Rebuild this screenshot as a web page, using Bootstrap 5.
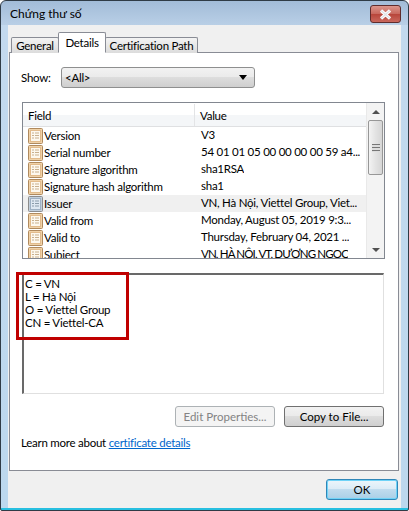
<!DOCTYPE html>
<html lang="vi"><head><meta charset="utf-8"><title>Chứng thư số</title>
<link href="https://cdn.jsdelivr.net/npm/bootstrap@5.3.0/dist/css/bootstrap.min.css" rel="stylesheet">
<style>
html,body{margin:0;background:#fff}
body{width:409px;height:511px;overflow:hidden;font:11.5px/15px Lato,"Noto Sans",sans-serif;letter-spacing:-.25px;color:#000}
.frame{position:relative;width:409px;height:511px;border:1px solid #2f3b46;border-radius:6px 6px 2px 2px;background:linear-gradient(#a2bcd8 0,#b9cfe6 24px,#c3d9ee 24px,#bcd8ee calc(100% - 2px),#27bfe0 calc(100% - 2px));padding:0 7px 2px 7px;display:flex;flex-direction:column}
.ttl{height:24px;flex:none;padding:5px 3px 0 2px;color:#000;display:flex;justify-content:space-between;align-items:flex-start;margin-right:-3px;font-size:12px;letter-spacing:0}
.xbtn{width:31px;height:18px;margin:-1px 0 0 0;display:flex;border:1px solid #5f2c2c;border-radius:3px;background:linear-gradient(#dc968c,#c9695e 48%,#b8463b 52%,#c9675c);align-items:center;justify-content:center}
.client{flex:1;background:#f0f0f0;padding:7px 3px 0 1px;display:flex;flex-direction:column}
.tabrow{display:flex;height:21px;padding-left:2px;align-items:flex-end;position:relative;z-index:1;margin-bottom:-1px}
.tabx{height:16px;border:1px solid #898c95;border-bottom:0;background:linear-gradient(#f3f3f3,#dcdcdc);line-height:15px;margin-right:-1px;border-radius:2px 2px 0 0;text-align:center;white-space:nowrap}
.tabw1{width:48px}.tabw2{width:48px}.tabw3{width:93px}
.tabx.on{height:21px;background:#fff;padding-top:2px;border-bottom:1px solid #fff;position:relative;z-index:2}
.panel{height:419px;border:1px solid #898c95;background:#fff;padding:14px 12px 0;flex:none;width:390px}
.showrow{display:flex;align-items:center;height:21px;margin-bottom:14px;margin-left:-1px}
.showlbl{width:40px}
.sel{width:194px;height:21px;border:1px solid #8e8f8f;border-radius:3px;background:linear-gradient(#f2f2f2 0,#ebebeb 45%,#dddddd 50%,#cfcfcf 100%);padding:0 3px;display:flex;align-items:center;justify-content:space-between}
.sel i{border:4px solid transparent;border-top:5px solid #000;border-bottom:0;margin-right:4px}
.listbox{height:157px;border:1px solid #828790;display:flex;overflow:hidden;width:363px}
.lcol{flex:1;min-width:0}
.lhead{display:flex;height:23px;line-height:23px;background:linear-gradient(#fff 50%,#f4f6f8 50%);border-bottom:1px solid #dfe0e2;margin-top:1px}
.lhead span:first-child{width:172px;flex:none;padding-left:5px;border-right:1px solid #e3e4e6}
.lhead span:last-child{padding-left:5px}
.rowx{display:flex;height:17px;line-height:16px;white-space:nowrap}
.rowx.sel-row{background:#f0f0f0}
.c1{width:173px;flex:none;display:flex;align-items:center;gap:1px;padding-left:5px}
.c2{padding-left:5px;overflow:hidden}
.c2.tight{letter-spacing:-.85px}
.sbar{width:18px;flex:none;background:#f3f3f3;border-left:1px solid #e9e9e9;display:flex;flex-direction:column;align-items:center}
.arr{height:17px;flex:none;display:flex;align-items:center;justify-content:center}
.arr i{border:4px solid transparent;border-top:0;border-bottom:4px solid #505050}
.arr.dn i{border-top:4px solid #505050;border-bottom:0}
.thumb{width:15px;height:55px;flex:none;border:1px solid #979797;border-radius:2px;background:linear-gradient(90deg,#f3f3f3,#e3e3e3 50%,#d6d6d6);display:flex;align-items:center;justify-content:center}
.grip{width:8px;height:8px;background:repeating-linear-gradient(#777 0 1px,#ddd 1px 3px)}
.grow{flex:1}
.detail{width:362px;height:121px;margin-top:14px;border:1px solid #e0e0e0;border-top:2px solid #696969;border-left:2px solid #696969;padding:2px 0 0 1px;line-height:13px}
.btnrow{display:flex;justify-content:flex-end;gap:9px;margin-top:12px;width:362px}
.wbtn{width:100px;height:21px;border:1px solid #707070;border-radius:3px;background:linear-gradient(#f2f2f2 0,#ebebeb 45%,#dddddd 50%,#cfcfcf 100%);display:flex;align-items:center;justify-content:center;color:#000;padding:0}
.wbtn.off{border-color:#adb2b5;background:#f4f4f4;color:#838383}
.learn{margin:8px 0 0 -1px;height:15px}
.learn a{color:#0066cc}
.foot{display:flex;justify-content:flex-end;padding-top:8px}
.okb{width:72px;height:21px;border:1px solid #2f86b8;border-radius:3px;background:linear-gradient(#ecf6fb 0,#dcecf6 45%,#c0dcee 50%,#a9cfe7 100%);box-shadow:inset 0 0 0 1px #6fd3f7;display:flex;align-items:center;justify-content:center;padding:0;color:#000}
.redbox{position:absolute;left:15px;top:271px;width:113px;height:68px;border:3px solid #c00000;pointer-events:none}
</style></head><body>
<svg width="0" height="0" class="d-block"><symbol id="ic" viewBox="0 0 15 17"><rect x=".5" y="1.5" width="14" height="15" rx="1" fill="#f0d2a8" stroke="#b08a5e"/><rect x="2.5" y="3.5" width="10" height="11" fill="#fdf8ee" stroke="#e2bb8c"/><path d="M4 6h2M7 6h4M4 8.500h2M7 8.500h4M4 11h2M7 11h4" stroke="#c9b08e"/></symbol>
<symbol id="ig" viewBox="0 0 15 17"><rect x=".5" y="1.500" width="14" height="15" rx="1" fill="#c2cfdc" stroke="#8c8c8c"/><rect x="2.500" y="3.500" width="10" height="11" fill="#dfe8f2" stroke="#9fb1c4"/><path d="M4 6h2M7 6h4M4 8.500h2M7 8.500h4M4 11h2M7 11h4" stroke="#8c9cab"/></symbol></svg>
<div class="frame">
 <div class="ttl"><span>Chứng thư số</span><span class="xbtn"><svg width="15" height="11" viewBox="0 0 15 11"><path d="M3 1.500 12 9.500M12 1.500 3 9.500" stroke="#fff" stroke-width="3.200" fill="none"/><path d="M3 1.500 12 9.500M12 1.500 3 9.500" stroke="#dfe3e8" stroke-width="1.200" fill="none"/></svg></span></div>
 <div class="client">
  <div class="tabrow"><div class="tabx tabw1">General</div><div class="tabx on tabw2">Details</div><div class="tabx tabw3">Certification Path</div></div>
  <div class="panel">
   <div class="showrow"><span class="showlbl">Show:</span><div class="sel"><span>&lt;All&gt;</span><i></i></div></div>
   <div class="listbox">
    <div class="lcol">
     <div class="lhead"><span>Field</span><span>Value</span></div>
     <div class="rowx"><div class="c1"><svg width="15" height="17"><use href="#ic"/></svg>Version</div><div class="c2">V3</div></div>
     <div class="rowx"><div class="c1"><svg width="15" height="17"><use href="#ic"/></svg>Serial number</div><div class="c2">54 01 01 05 00 00 00 00 59 a4...</div></div>
     <div class="rowx"><div class="c1"><svg width="15" height="17"><use href="#ic"/></svg>Signature algorithm</div><div class="c2">sha1RSA</div></div>
     <div class="rowx"><div class="c1"><svg width="15" height="17"><use href="#ic"/></svg>Signature hash algorithm</div><div class="c2">sha1</div></div>
     <div class="rowx sel-row"><div class="c1"><svg width="15" height="17"><use href="#ig"/></svg>Issuer</div><div class="c2">VN, Hà Nội, Viettel Group, Viet...</div></div>
     <div class="rowx"><div class="c1"><svg width="15" height="17"><use href="#ic"/></svg>Valid from</div><div class="c2">Monday, August 05, 2019 9:3...</div></div>
     <div class="rowx"><div class="c1"><svg width="15" height="17"><use href="#ic"/></svg>Valid to</div><div class="c2">Thursday, February 04, 2021 ...</div></div>
     <div class="rowx"><div class="c1"><svg width="15" height="17"><use href="#ic"/></svg>Subject</div><div class="c2 tight">VN, HÀ NỘI, VT, DƯƠNG NGỌC</div></div>
    </div>
    <div class="sbar"><div class="arr"><i></i></div><div class="thumb"><span class="grip"></span></div><div class="grow"></div><div class="arr dn"><i></i></div></div>
   </div>
   <div class="detail">C = VN<br>L = Hà Nội<br>O = Viettel Group<br>CN = Viettel-CA</div>
   <div class="btnrow"><button class="wbtn off" disabled>Edit Properties...</button><button class="wbtn">Copy to File...</button></div>
   <div class="learn">Learn more about <a href="#">certificate details</a></div>
  </div>
  <div class="foot"><button class="okb">OK</button></div>
 </div>
 <div class="redbox"></div>
</div>
<script src="https://cdn.jsdelivr.net/npm/bootstrap@5.3.0/dist/js/bootstrap.bundle.min.js"></script>
</body></html>
